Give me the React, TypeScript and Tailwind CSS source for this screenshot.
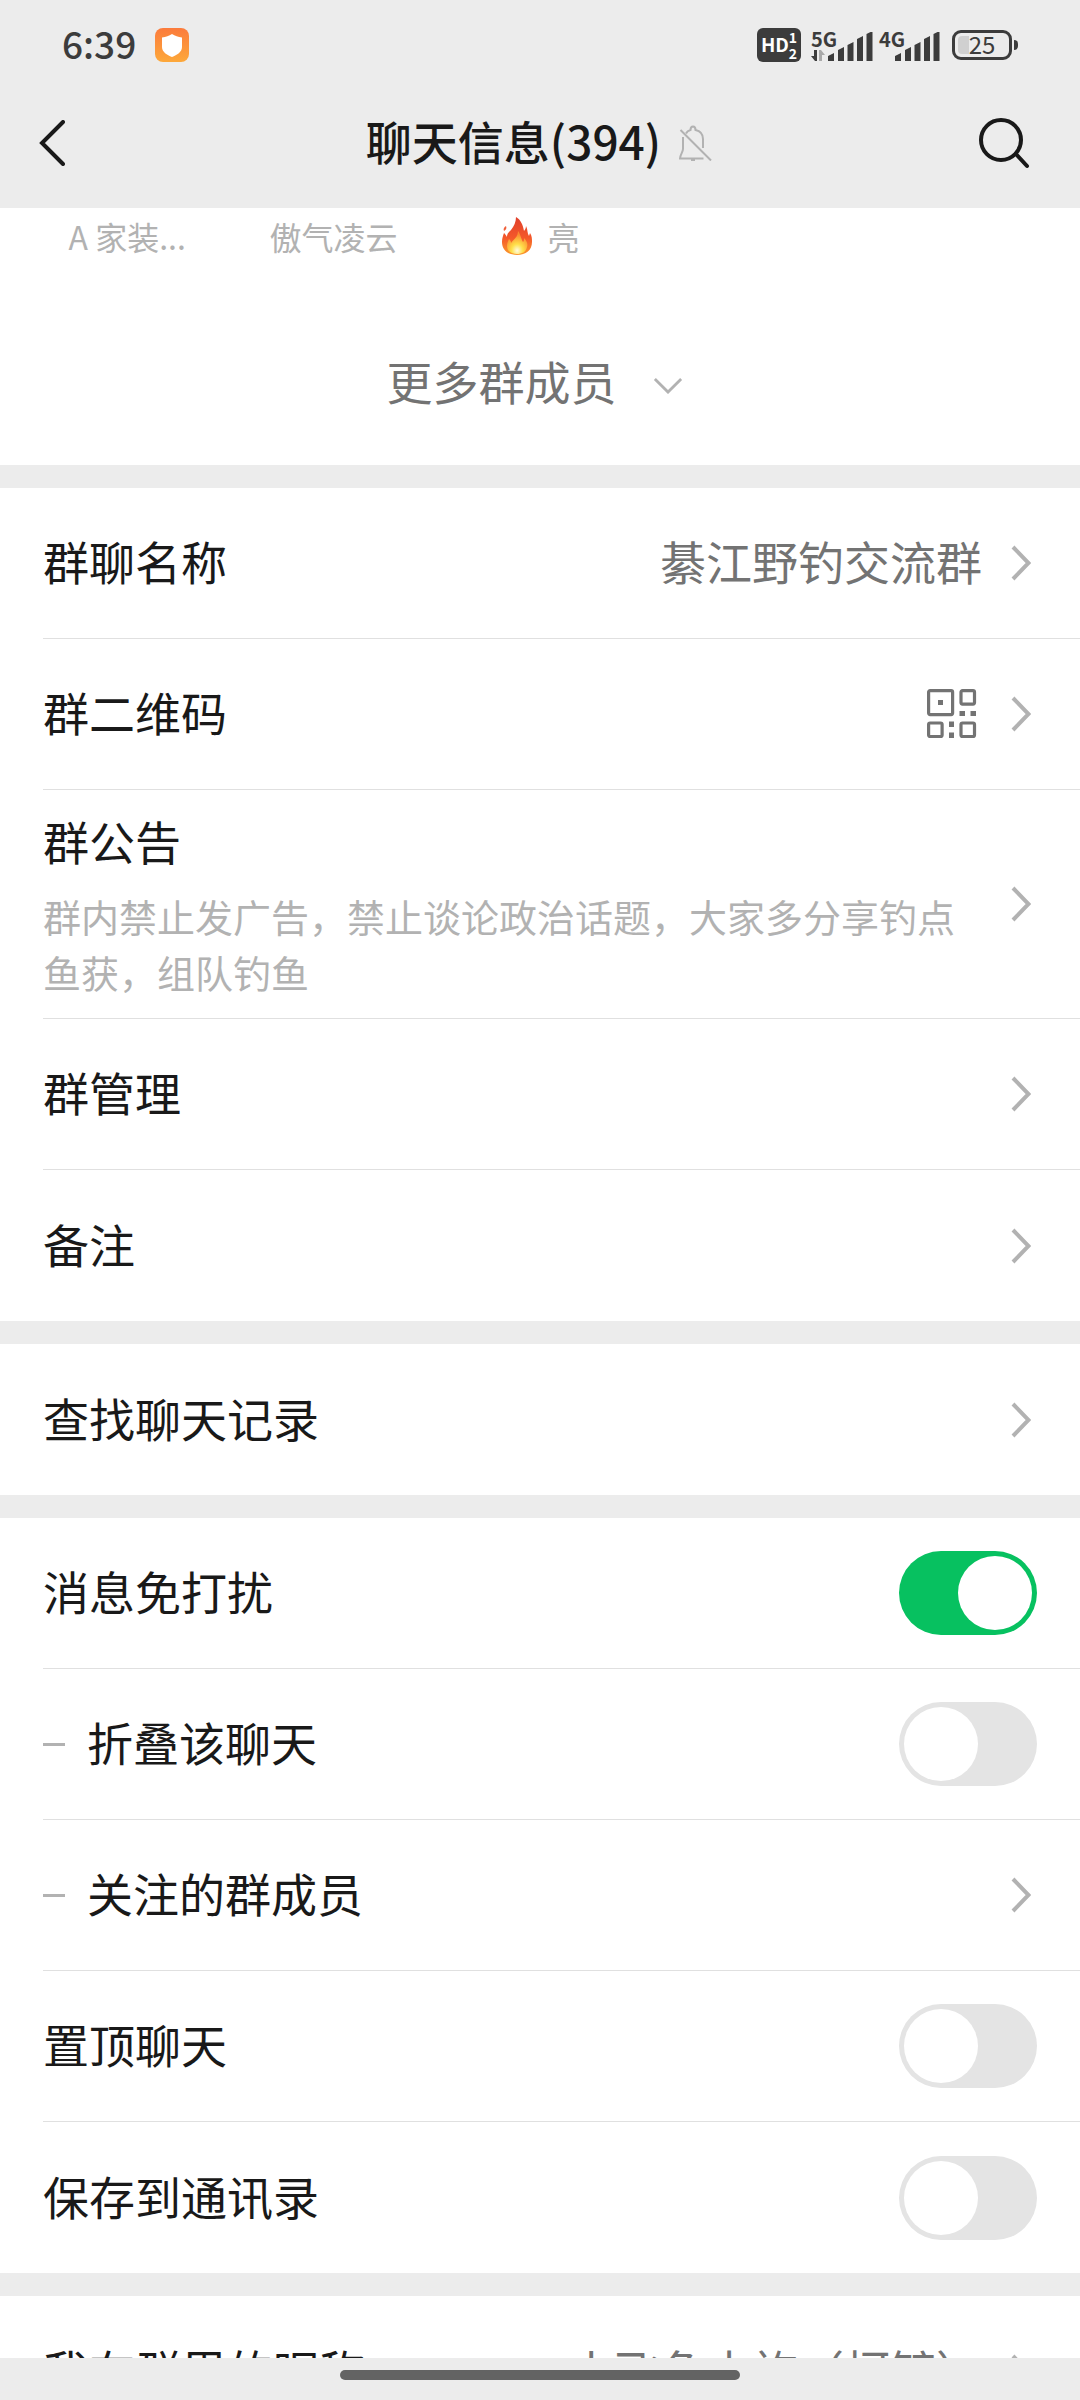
import React, { useState } from "react";
import type { ReactNode } from "react";

const MEMBERS = [
  { name: "A 家装...", fire: false },
  { name: "傲气凌云", fire: false },
  { name: "亮", fire: true },
];

function FireIcon() {
  return (
    <svg className="w-[34px] h-[40px]" viewBox="0 0 32 40" aria-hidden="true">
      <defs>
        <linearGradient id="flame" x1="0" y1="0" x2="0" y2="1">
          <stop offset="0" stopColor="#e0402c" />
          <stop offset="0.55" stopColor="#f4582a" />
          <stop offset="1" stopColor="#fb9a2c" />
        </linearGradient>
        <radialGradient id="core" cx="0.5" cy="0.85" r="0.7">
          <stop offset="0" stopColor="#fffbe0" />
          <stop offset="0.4" stopColor="#ffe04a" />
          <stop offset="1" stopColor="#fb8a2f" />
        </radialGradient>
      </defs>
      <path
        d="M15 1C20 4 22 9 23 15c1-1 2-3 2-5 2 4 1 7 3 10l1-3c2 3 2 6 2 9 0 8-6 13-15 13S1 34 1 26c0-4 1-6 2-9 1 1 2 2 3 4 0-3 1-4 4-7 3-4 5-8 5-13z"
        fill="url(#flame)"
      />
      <path d="M5 10c-2 1-3 3-2 5 2-1 3-3 2-5z" fill="#f0603a" />
      <path
        d="M17 15c3 4 3 8 5 11 1-1 1-2 1-4 3 3 4 6 3 9-1 5-5 7-10 7S6 36 6 30c0-3 1-5 2-7 1 1 2 2 2 4 3-4 7-6 7-12z"
        fill="url(#core)"
      />
    </svg>
  );
}

function SignalBars() {
  return (
    <svg className="w-[45px] h-[29px]" viewBox="0 0 45 29" fill="#3c3c3c" aria-hidden="true">
      <path d="M0 24l6-3v8H0zM10 18l6-3v14h-6zM19.5 13l6-3v19h-6zM29 7l6-3v25h-6zM38.5 2l6-3v30h-6z" />
    </svg>
  );
}

function BellOff() {
  return (
    <svg className="w-[34px] h-[36px]" viewBox="0 0 34 36" fill="none" stroke="#b2b2b2" strokeWidth="2" aria-hidden="true">
      <path d="M8 8.5C9 6.5 10.5 5.5 12.5 5c0-2.5 1-3.5 2.5-3.5s2.5 1 2.5 3.5c4.500 1 7.500 4.500 7.500 9v9" />
      <path d="M5 12v12c0 3-3 6-3 9.5h23.5" />
      <path d="M13 35h4M2.5 5l30.5 30.5" />
    </svg>
  );
}

function QrIcon() {
  return (
    <svg className="w-[50px] h-[50px] mr-[5px]" viewBox="0 0 50 50" fill="none" stroke="#737373" strokeWidth="3.2" aria-hidden="true">
      <rect x="1.6" y="1.6" width="24" height="24" rx="1.5" />
      <rect x="34" y="1.6" width="13.5" height="13.5" rx="1.5" />
      <rect x="1.6" y="34" width="13.5" height="13.5" rx="1.5" />
      <rect x="34" y="34" width="13.5" height="13.5" rx="1.5" />
      <path
        d="M11 11h5v5h-5zM32.5 22H38v5h-5.5zM43.5 22H49v5h-5.5zM22 32.5h5V38h-5zM22 43.5h5V49h-5z"
        fill="#737373"
        stroke="none"
      />
    </svg>
  );
}

function Chevron() {
  return (
    <svg className="w-[20px] h-[36px] shrink-0 mr-[6px]" viewBox="0 0 20 36" fill="none" stroke="#b2b2b2" strokeWidth="4" aria-hidden="true">
      <path d="M2 2l15.5 16L2 34" />
    </svg>
  );
}

function Label({ text, dash }: { text: string; dash?: boolean }) {
  return (
    <span className="flex items-center gap-[22px]">
      {dash && <span className="w-[22px] h-[3px] bg-[#b2b2b2]" />}
      <span className="pb-[6px]">{text}</span>
    </span>
  );
}

function LinkRow({ label, dash, children }: { label: string; dash?: boolean; children?: ReactNode }) {
  return (
    <button type="button" className="w-full h-[151px] pr-[43px] flex items-center justify-between text-left">
      <Label text={label} dash={dash} />
      <span className="flex items-center gap-[29px] text-[#737373]">
        {children}
        <Chevron />
      </span>
    </button>
  );
}

function SwitchRow({ label, dash, initial = false }: { label: string; dash?: boolean; initial?: boolean }) {
  const [on, setOn] = useState(initial);
  return (
    <label className="h-[151px] pr-[43px] flex items-center justify-between">
      <Label text={label} dash={dash} />
      <input
        type="checkbox"
        role="switch"
        checked={on}
        onChange={() => setOn(!on)}
        className="appearance-none w-[138px] h-[84px] p-[5px] rounded-full flex bg-[#e4e4e4] checked:bg-[#07c160] checked:justify-end before:block before:w-[74px] before:h-[74px] before:rounded-full before:bg-white"
      />
    </label>
  );
}

function Group({ children }: { children: ReactNode }) {
  return (
    <section className="bg-white pl-[43px] flex flex-col shrink-0 divide-y divide-[#e0e0e0]">{children}</section>
  );
}

export default function App() {
  return (
    <div className="h-screen flex flex-col overflow-hidden bg-[#ececec] text-[46px] leading-[64px] text-[#191919] font-['Noto_Sans_CJK_SC',sans-serif]">
      {/* Status bar */}
      <div className="h-[90px] shrink-0 px-[62px] flex items-center justify-between text-[#3c3c3c]">
        <div className="flex items-center gap-[19px]">
          <span className="pb-[4px] text-[37px] leading-[48px] font-medium">6:39</span>
          <svg className="w-[34px] h-[34px]" viewBox="0 0 34 34" aria-hidden="true">
            <defs>
              <linearGradient id="guard" x1="0" y1="0" x2="0" y2="1">
                <stop offset="0" stopColor="#fb7b3c" />
                <stop offset="1" stopColor="#fda83a" />
              </linearGradient>
            </defs>
            <rect width="34" height="34" rx="8" fill="url(#guard)" />
            <path d="M17 6c3 2 6 3 10 3.5V19c0 5-5 8-10 10-5-2-10-5-10-10V9.5C11 9 14 8 17 6z" fill="#fff" />
          </svg>
        </div>

        <div className="flex items-center">
          <div className="w-[44px] h-[34px] rounded-md bg-[#3c3c3c] text-white font-bold flex items-center justify-center">
            <span className="pb-[2px] text-[19px] leading-[32px]">HD</span>
            <span className="flex flex-col text-[14px] leading-[16px]">
              <span>1</span>
              <span>2</span>
            </span>
          </div>
          <div className="ml-[10px] flex items-end">
            <div className="w-[17px] h-[32px] flex flex-col justify-between font-bold">
              <span className="text-[20px] leading-[19px]">5G</span>
              <svg className="w-[14px] h-[11px]" viewBox="0 0 14 11" aria-hidden="true">
                <path d="M3 0h3v11H4L0 6h3z" fill="#3c3c3c" />
                <path d="M11 11H8V0h2l4 5h-3z" fill="#a9a9a9" />
              </svg>
            </div>
            <SignalBars />
          </div>
          <div className="ml-[6px] flex items-end">
            <div className="w-[16px] h-[32px] font-bold text-[20px] leading-[19px]">4G</div>
            <SignalBars />
          </div>
          <div className="ml-[12px] flex items-center gap-[2px]">
            <div className="relative w-[60px] h-[30px] rounded-[9px] border-3 border-[#3c3c3c] flex items-center justify-center text-[24px] leading-[24px]">
              <span className="absolute left-[3px] inset-y-[3px] w-[11px] rounded-l bg-[#d0d0d0]" />
              <span className="relative pb-[2px]">25</span>
            </div>
            <span className="w-[4px] h-[10px] rounded-r bg-[#3c3c3c]" />
          </div>
        </div>
      </div>

      {/* Title bar */}
      <header className="h-[118px] shrink-0 pb-[12px] pl-[39px] pr-[41px] flex items-center justify-between">
        <button type="button" aria-label="返回" className="w-[60px]">
          <svg className="w-[26px] h-[46px]" viewBox="0 0 26 46" fill="none" stroke="#191919" strokeWidth="4" strokeLinecap="round" aria-hidden="true">
            <path d="M24 2L3 23l21 21" />
          </svg>
        </button>
        <div className="flex items-center gap-[17px]">
          <h1 className="pb-[6px] font-medium">聊天信息(394)</h1>
          <BellOff />
        </div>
        <button type="button" aria-label="搜索" className="w-[60px] flex justify-end">
          <svg className="w-[60px] h-[52px]" viewBox="0 0 60 52" fill="none" stroke="#191919" strokeWidth="4" strokeLinecap="round" aria-hidden="true">
            <circle cx="22" cy="23" r="20" />
            <path d="M37 37l11 12" />
          </svg>
        </button>
      </header>

      <main className="flex-1 min-h-0 overflow-hidden flex flex-col gap-[23px]">
        <section className="shrink-0 h-[257px] bg-white">
          <ul className="px-6 pt-[4px] grid grid-cols-5 text-[32px] leading-[48px] text-[#b2b2b2]">
            {MEMBERS.map((m) => (
              <li key={m.name} className="flex items-center justify-center gap-[13px]">
                {m.fire && <FireIcon />}
                {m.name}
              </li>
            ))}
          </ul>
          <button type="button" className="mt-[88px] w-full pr-[11px] flex items-center justify-center gap-[36px] text-[#737373]">
            更多群成员
            <svg className="w-[30px] h-[17px] mt-[10px]" viewBox="0 0 32 18" fill="none" stroke="#b2b2b2" strokeWidth="3" aria-hidden="true">
              <path d="M2 2l14 14L30 2" />
            </svg>
          </button>
        </section>

        <Group>
          <LinkRow label="群聊名称">
            <span className="pb-[6px]">綦江野钓交流群</span>
          </LinkRow>
          <LinkRow label="群二维码">
            <QrIcon />
          </LinkRow>
          <button type="button" className="w-full py-[18px] pr-[43px] flex items-center justify-between gap-[29px] text-left">
            <span className="flex flex-col gap-4">
              <span>群公告</span>
              <span className="text-[38px] leading-[56px] text-[#b2b2b2]">
                群内禁止发广告，禁止谈论政治话题，大家多分享钓点鱼获，组队钓鱼
              </span>
            </span>
            <Chevron />
          </button>
          <LinkRow label="群管理" />
          <LinkRow label="备注" />
        </Group>

        <Group>
          <LinkRow label="查找聊天记录" />
        </Group>

        <Group>
          <SwitchRow label="消息免打扰" initial />
          <SwitchRow label="折叠该聊天" dash />
          <LinkRow label="关注的群成员" dash />
          <SwitchRow label="置顶聊天" />
          <SwitchRow label="保存到通讯录" />
        </Group>

        <Group>
          <LinkRow label="我在群里的昵称">
            <span className="pb-[6px]">小飞鱼水族（柯毓）</span>
          </LinkRow>
        </Group>
      </main>

      {/* Gesture bar */}
      <footer className="h-[42px] shrink-0 pt-[12px] flex justify-center">
        <div className="w-[400px] h-[10px] rounded-full bg-[#636363]" />
      </footer>
    </div>
  );
}
